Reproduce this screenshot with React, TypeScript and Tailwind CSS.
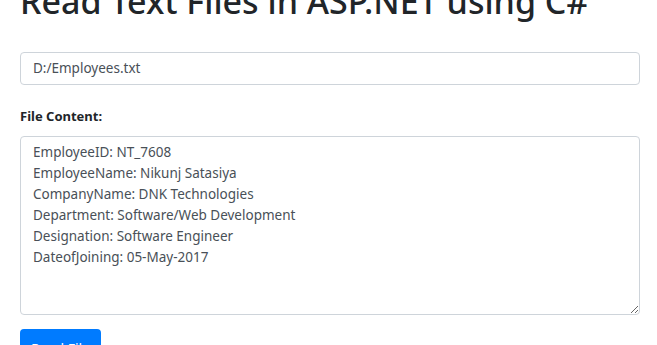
const content = `EmployeeID: NT_7608
EmployeeName: Nikunj Satasiya
CompanyName: DNK Technologies
Department: Software/Web Development
Designation: Software Engineer
DateofJoining: 05-May-2017`;

const App = () => {
  return (
    <div className="h-[345px] overflow-hidden bg-white pl-5 pr-[17px] font-['Noto_Sans',sans-serif] text-[#212529]">
      <h1 className="mt-[-19px] mb-[30px] text-[34px] font-medium leading-[1.2]">
        Read Text Files in ASP.NET using C#
      </h1>
      <input
        type="text"
        defaultValue="D:/Employees.txt"
        className="block h-[33px] w-full rounded border border-[#ced4da] px-3 text-[13.5px] text-[#495057] outline-none"
      />
      <label className="mt-[22px] mb-[10px] block text-[13px] font-bold">
        File Content:
      </label>
      <textarea
        readOnly
        defaultValue={content}
        className="block h-[179px] w-full resize-y rounded border border-[#ced4da] px-3 py-[5px] text-[13.5px] leading-[21px] text-[#495057] outline-none"
      />
      <button className="mt-[14px] h-[38px] rounded bg-[#007bff] px-[11px] text-[14px] text-white">
        Read File
      </button>
    </div>
  );
};

export default App;
